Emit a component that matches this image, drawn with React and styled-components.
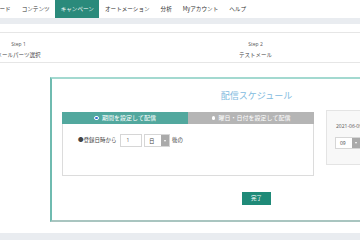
import React from 'react';
import styled, { createGlobalStyle } from 'styled-components';

const GlobalStyle = createGlobalStyle`
  html, body {
    margin: 0;
    padding: 0;
    background: #fff;
    overflow: hidden;
  }
  body {
    font-family: "Noto Sans CJK JP", "Noto Sans", sans-serif;
    color: #444;
  }
`;

const Page = styled.div`
  margin-left: -100px;
  width: 620px;
`;

const Nav = styled.nav`
  display: flex;
  height: 17.5px;
  padding-left: 66px;
  background: #fff;
`;

const NavItem = styled.div`
  display: flex;
  align-items: center;
  padding: 0 5.5px;
  font-size: 5.6px;
  white-space: nowrap;
  color: ${(p) => (p.$active ? '#fff' : '#333')};
  background: ${(p) => (p.$active ? '#2a8a7b' : 'transparent')};
`;

const Band = styled.div`
  height: ${(p) => p.$h}px;
  background: #e9ecf0;
`;

const Main = styled.div`
  padding-top: 8px;
  padding-bottom: 11px;
`;

const Steps = styled.div`
  display: flex;
  height: 29px;
  border-top: 1px solid #e6e6e6;
  border-bottom: 1px solid #e6e6e6;
`;

const Step = styled.div`
  width: 237px;
  flex: none;
  display: flex;
  flex-direction: column;
  align-items: center;
  padding-top: 8px;
  box-sizing: border-box;
`;

const StepLabel = styled.div`
  font-family: "Open Sans", sans-serif;
  font-size: 5px;
  line-height: 7px;
  color: #555;
`;

const StepName = styled.div`
  font-size: 5.5px;
  line-height: 8px;
  margin-top: 3px;
  color: #444;
  white-space: nowrap;
`;

const Card = styled.section`
  margin: 14px 0 0 150px;
  width: 409px;
  height: 141px;
  border-top: 2px solid #a3d9d0;
  border-left: 2px solid #6fbbb0;
  border-bottom: 2px solid #a9c5c0;
  display: flex;
  flex-direction: column;
  align-items: stretch;
`;

const Title = styled.h2`
  margin: 0;
  padding-top: 11px;
  font-size: 9px;
  line-height: 12px;
  font-weight: 400;
  text-align: center;
  color: #82bbe0;
`;

const Body = styled.div`
  display: flex;
  align-items: flex-start;
  gap: 12px;
  padding-left: 10px;
  margin-top: 9.5px;
`;

const Panel = styled.div`
  width: 252px;
  flex: none;
`;

const Tabs = styled.div`
  display: flex;
  height: 12.5px;
`;

const Tab = styled.div`
  flex: 1;
  display: flex;
  align-items: center;
  justify-content: center;
  gap: 3.5px;
  font-size: 6px;
  color: #fff;
  background: ${(p) => (p.$active ? '#52a89e' : '#b5b5b5')};
  white-space: nowrap;
`;

const Radio = styled.span`
  width: ${(p) => (p.$on ? 2.5 : 3.5)}px;
  height: ${(p) => (p.$on ? 2.5 : 3.5)}px;
  border-radius: 50%;
  background: ${(p) => (p.$on ? '#2f6fd6' : '#fff')};
  border: ${(p) => (p.$on ? '1px solid #fff' : '0')};
  box-sizing: content-box;
`;

const PanelBody = styled.div`
  height: 52px;
  border: 1px solid #dcdcdc;
  border-top: 0;
  padding: 10px 0 0 15px;
  box-sizing: border-box;
  display: flex;
  align-items: flex-start;
`;

const Label = styled.span`
  font-size: 5.5px;
  line-height: 13px;
  color: #444;
  white-space: nowrap;
  margin-left: ${(p) => p.$ml || 0}px;
`;

const Input = styled.div`
  width: 22px;
  height: 13px;
  margin-left: 3px;
  border: 1px solid #d6d6d6;
  box-sizing: border-box;
  padding-left: 6px;
  font-family: "Open Sans", sans-serif;
  font-size: 5px;
  line-height: 11px;
  color: #555;
`;

const Select = styled.div`
  width: ${(p) => p.$w}px;
  height: ${(p) => p.$h || 13}px;
  margin-left: ${(p) => p.$ml || 0}px;
  border: 1px solid #d6d6d6;
  box-sizing: border-box;
  display: flex;
  background: #fff;
  font-size: 5.5px;
  color: #444;
  flex: none;
`;

const SelectValue = styled.span`
  flex: 1;
  padding-left: 4px;
  display: flex;
  align-items: center;
  font-family: ${(p) => (p.$num ? '"Open Sans", sans-serif' : 'inherit')};
  font-size: ${(p) => (p.$num ? 5 : 5.5)}px;
`;

const Arrow = styled.span`
  width: 8px;
  background: #aaa;
  display: flex;
  align-items: center;
  justify-content: center;
  &::after {
    content: '';
    border-left: 1.5px solid transparent;
    border-right: 1.5px solid transparent;
    border-top: 2px solid #fff;
  }
`;

const Side = styled.div`
  width: 121px;
  height: 55px;
  margin-top: -1.5px;
  flex: none;
  background: #f8f8f8;
  border: 1px solid #e4e4e4;
  box-sizing: border-box;
  padding: 12px 0 0 8px;
`;

const DateText = styled.div`
  font-family: "Open Sans", sans-serif;
  font-size: 5px;
  line-height: 7px;
  color: #555;
  margin-left: 1px;
`;

const SideRow = styled.div`
  display: flex;
  margin-top: 7px;
`;

const Footer = styled.div`
  display: flex;
  justify-content: center;
  margin-top: 16px;
`;

const Button = styled.button`
  width: 29px;
  height: 12.5px;
  padding: 0;
  border: 0;
  background: #1f8a78;
  color: #fff;
  font-family: inherit;
  font-size: 5.5px;
`;

const navItems = ['ダッシュボード', 'コンテンツ', 'キャンペーン', 'オートメーション', '分析', 'Myアカウント', 'ヘルプ'];

const App = () => {
  return (
    <Page>
      <GlobalStyle />
      <Nav>
        {navItems.map((item) => (
          <NavItem key={item} $active={item === 'キャンペーン'}>{item}</NavItem>
        ))}
      </Nav>
      <Band $h={6.5} />
      <Main>
        <Steps>
          <Step>
            <StepLabel>Step 1</StepLabel>
            <StepName>メールパーツ選択</StepName>
          </Step>
          <Step>
            <StepLabel>Step 2</StepLabel>
            <StepName>テストメール</StepName>
          </Step>
        </Steps>
        <Card>
          <Title>配信スケジュール</Title>
          <Body>
            <Panel>
              <Tabs>
                <Tab $active><Radio $on />期間を設定して配信</Tab>
                <Tab><Radio />曜日・日付を設定して配信</Tab>
              </Tabs>
              <PanelBody>
                <Label>●登録日時から</Label>
                <Input>1</Input>
                <Select $w={25.5} $ml={2.5}>
                  <SelectValue>日</SelectValue>
                  <Arrow />
                </Select>
                <Label $ml={2.5}>後の</Label>
              </PanelBody>
            </Panel>
            <Side>
              <DateText>2021-06-09</DateText>
              <SideRow>
                <Select $w={26} $h={12}>
                  <SelectValue $num>09</SelectValue>
                  <Arrow />
                </Select>
              </SideRow>
            </Side>
          </Body>
          <Footer>
            <Button>完了</Button>
          </Footer>
        </Card>
      </Main>
      <Band $h={10} />
    </Page>
  );
};

export default App;
